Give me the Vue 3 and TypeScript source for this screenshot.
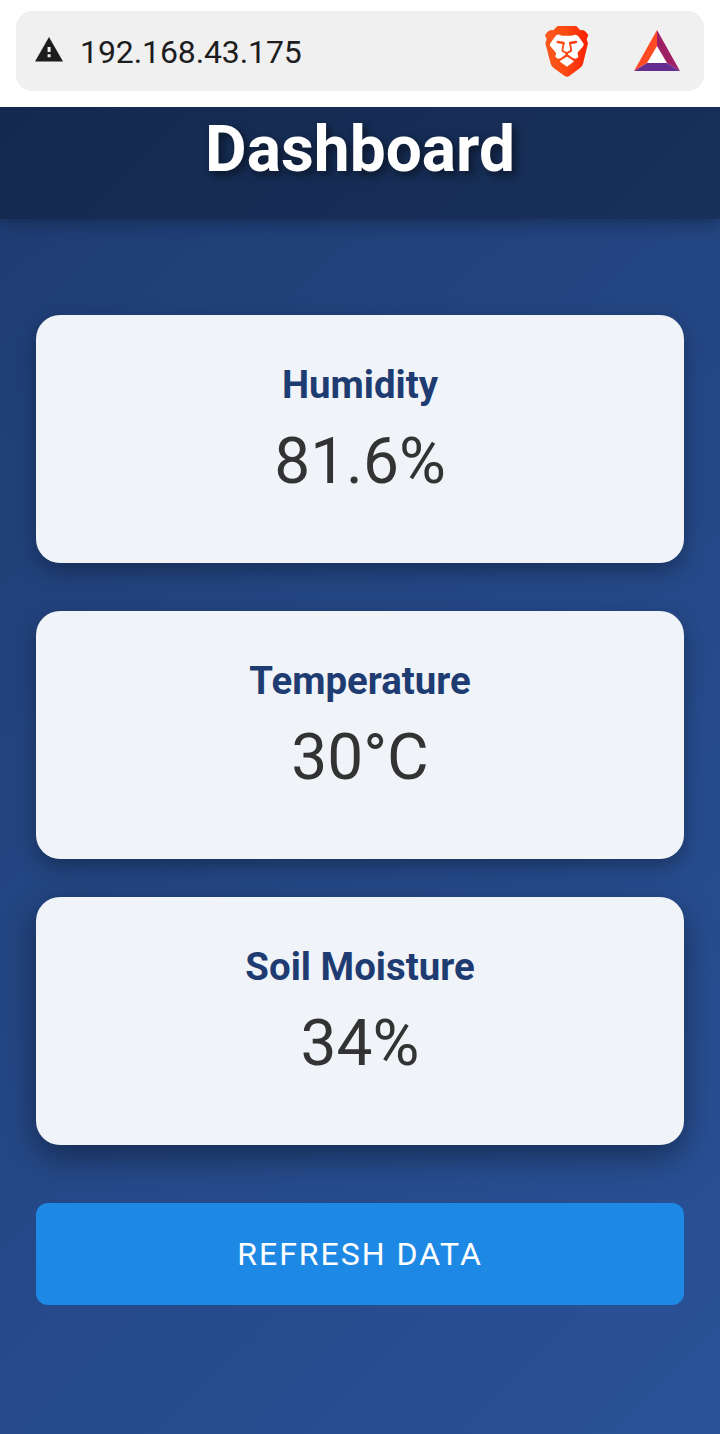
<script setup lang="ts">
interface Reading {
  label: string
  value: string
  raised?: boolean
}

const address = '192.168.43.175'
const readings: Reading[] = [
  { label: 'Humidity', value: '81.6%' },
  { label: 'Temperature', value: '30°C' },
  { label: 'Soil Moisture', value: '34%', raised: true },
]
</script>

<template>
  <div class="screen">
    <div class="browser-bar">
      <div class="address">
        <svg class="warning" viewBox="0 0 28 25" aria-hidden="true">
          <path d="M14 0 28 24.5H0Z" fill="#1d1d1f" />
          <path d="M12.6 10h3v5h-3zM12.6 17.2h3v3h-3z" fill="#f0f0f0" />
        </svg>
        <span class="url">{{ address }}</span>
        <svg class="lion" viewBox="42 42 136 159" aria-hidden="true">
          <defs>
            <linearGradient id="mane" x1="42" x2="178" y1="0" y2="0" gradientUnits="userSpaceOnUse">
              <stop offset="0" stop-color="#fb5a1e" />
              <stop offset=".48" stop-color="#fb4a12" />
              <stop offset="1" stop-color="#fa1e04" />
            </linearGradient>
          </defs>
          <path
            d="M82 45H139L151 58Q160 55 167 62L175 72L170 85L174 97L159 158Q157 166 150 171L118 195Q111 200 104 195L71 171Q64 166 62 158L46 97L50 85L45 72L53 62Q60 55 70 58Z"
            fill="url(#mane)"
          />
          <path
            d="M88 71Q99 76 110 74Q122 76 134 71Q142 71 145 76L161 98Q162 103 157 109L144 123Q141 127 144 132Q147 138 142 141L136 143Q130 143 125 139L112 129H109L96 139Q91 143 85 143L79 140Q74 137 77 132Q80 127 76 123L63 108Q58 103 60 98L76 76Q80 70 88 71Z"
            fill="#fff"
          />
          <g fill="none" stroke="url(#mane)" stroke-linecap="round" stroke-linejoin="round">
            <path d="M83 93 101 96M138 93 120 96" stroke-width="7" />
            <path d="M101 97 97 119 110 127 124 119 120 97" stroke-width="5.5" />
            <path d="M110 126V133" stroke-width="7" />
          </g>
          <path
            d="M109 138Q111 137 113 138L130 149Q132 151 130 153L114 165Q111 168 108 165L91 153Q89 151 91 149Z"
            fill="#fff"
          />
        </svg>
        <svg class="rewards" viewBox="0 0 46 42" aria-hidden="true">
          <path d="M23 0 46 41H0Z" fill="#fff" />
          <path d="M23 0V16L13 33 0 41Z" fill="#ff4a24" />
          <path d="M23 0 46 41 33 33 23 16Z" fill="#9e1f63" />
          <path d="M0 41 13 33H33L46 41Z" fill="#662d91" />
        </svg>
      </div>
    </div>

    <main class="page">
      <header class="header">
        <h1 class="title">Dashboard</h1>
      </header>
      <section class="content">
        <article
          v-for="reading in readings"
          :key="reading.label"
          class="card"
          :class="{ raised: reading.raised }"
        >
          <h2 class="label">{{ reading.label }}</h2>
          <p class="value">{{ reading.value }}</p>
        </article>
        <button class="refresh" type="button">REFRESH DATA</button>
      </section>
    </main>
  </div>
</template>

<style>
body {
  margin: 0;
}
</style>

<style scoped>
.screen {
  display: flex;
  flex-direction: column;
  width: 720px;
  height: 1434px;
  overflow: hidden;
  font-family: Roboto, "Liberation Sans", sans-serif;
}
.browser-bar {
  box-sizing: border-box;
  flex: none;
  height: 107px;
  padding: 11px 16px 16px;
  background: #fff;
}
.address {
  box-sizing: border-box;
  display: flex;
  align-items: center;
  height: 80px;
  padding: 0 24px 0 19px;
  border-radius: 16px;
  background: #f0f0f0;
}
.warning {
  width: 28px;
  height: 25px;
  margin-bottom: 3px;
}
.url {
  flex: 1;
  margin-left: 17px;
  padding-top: 2px;
  font-size: 32px;
  line-height: 40px;
  letter-spacing: -0.1px;
  color: #1d1d1f;
}
.lion {
  width: 45.33px;
  height: 53px;
  margin-right: 45px;
}
.rewards {
  width: 46px;
  height: 42px;
}
.page {
  flex: 1;
  overflow: hidden;
  background: linear-gradient(135deg, #1e3c72, #2a5298);
}
.header {
  box-sizing: border-box;
  height: 112px;
  padding-top: 5px;
  background: rgba(0, 0, 0, 0.3);
  box-shadow: 0 4px 16px rgba(0, 0, 0, 0.3);
}
.title {
  margin: 0;
  font-size: 64px;
  font-weight: 700;
  line-height: 75px;
  text-align: center;
  color: #fff;
  text-shadow: 4px 4px 8px rgba(0, 0, 0, 0.5);
}
.content {
  display: flex;
  flex-direction: column;
  gap: 48px;
  padding: 96px 36px 0;
}
.card {
  box-sizing: border-box;
  height: 248px;
  padding-top: 47px;
  border-radius: 24px;
  background: #f0f4f8;
  text-align: center;
  box-shadow: 0 8px 20px rgba(0, 0, 0, 0.3);
}
.raised {
  transform: translateY(-10px);
  box-shadow: 0 12px 32px rgba(0, 0, 0, 0.4);
}
.label {
  margin: 0;
  font-size: 38.4px;
  font-weight: 700;
  line-height: 45px;
  color: #1e3c72;
}
.value {
  margin: 17px 0 0;
  font-size: 64px;
  line-height: 75px;
  color: #333;
}
.refresh {
  height: 102px;
  padding: 0;
  border: 0;
  border-radius: 12px;
  background: #1e88e5;
  color: #fff;
  font-family: inherit;
  font-size: 32px;
  letter-spacing: 2px;
}
</style>
